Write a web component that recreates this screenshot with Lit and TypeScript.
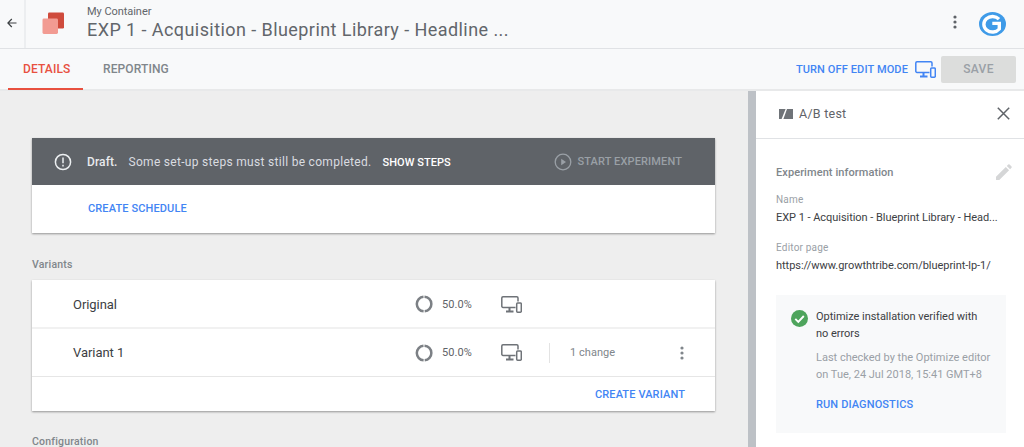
import { LitElement, html, css } from "lit";
import { customElement } from "lit/decorators.js";

const devices = (color: string, w = 21) => html`<svg class="dev" width=${w} height="17" viewBox="0 0 21 17" fill="none" stroke=${color} stroke-width="1.5">
  <path d="M14.5 11.4H2a1.2 1.2 0 0 1-1.2-1.2V2A1.2 1.2 0 0 1 2 .8h13.8A1.2 1.2 0 0 1 17 2v3.4"/>
  <path d="M8.5 11.5v3.4M5 15.6h7.5" stroke-width="2"/>
  <rect x="15.7" y="7" width="4.6" height="9.2" rx=".9"/>
</svg>`;

const donut = html`<svg width="18" height="18" viewBox="0 0 18 18" fill="none" stroke="#7c8085" stroke-width="2.5">
  <path d="M9.5 1.7a7.35 7.35 0 0 1 .2 14.65"/><path d="M8.6 16.35a7.35 7.35 0 0 1-.1-14.65"/>
</svg>`;

const kebab = (c: string) => html`<svg width="4" height="14" viewBox="0 0 4 14" fill=${c}><circle cx="2" cy="2" r="1.6"/><circle cx="2" cy="7" r="1.6"/><circle cx="2" cy="12" r="1.6"/></svg>`;

@customElement("app-root")
export class AppRoot extends LitElement {
  static styles = css`
    :host { display: block; width: 1024px; height: 447px; overflow: hidden; font-family: Roboto, "Liberation Sans", sans-serif; background: #eee; color: #3c4043; }
    * { box-sizing: border-box; }
    .top { height: 49px; display: flex; align-items: center; background: #f8f9fa; border-bottom: 1px solid #e0e2e5; }
    .back { width: 26px; height: 48px; border-right: 2px solid #eceef0; display: flex; align-items: center; padding: 0 0 2px 7px; }
    .logo { margin: 0 0 2px 16px; width: 23px; height: 23px; flex: none; }
    .titles { margin-left: 22px; flex: 1; display: flex; flex-direction: column; }
    .crumb { font-size: 11px; line-height: 13px; color: #62666b; margin-top: -1px; letter-spacing: -.05px; }
    .title { font-size: 18px; line-height: 24px; color: #62666b; letter-spacing: .43px; }
    .topkebab { display: flex; margin: -4px 22px 0 0; }
    .avatar { width: 27px; height: 24px; margin: -1px 18px 0 0; flex: none; }

    .tabs { height: 42px; display: flex; align-items: center; background: #f8f9fa; border-bottom: 2px solid #e8e9ea; padding-right: 8px; }
    .tab { font-size: 12px; font-weight: 500; letter-spacing: .12px; height: 41px; display: flex; align-items: center; color: #80868b; }
    .tab.on { color: #e8503f; margin-left: 8px; padding: 0 15px; width: 75px; height: 41px; border-bottom: 2px solid #e8503f; margin-bottom: -1px; }
    .tab.second { margin-left: 20px; }
    .sp { flex: 1; }
    .link { color: #4285f4; font-size: 11px; font-weight: 500; letter-spacing: .12px; }
    .edit { display: flex; align-items: center; gap: 7px; margin-right: 5px; }
    .save { width: 75px; height: 27px; background: #dcdddc; border-radius: 2px; color: #9aa0a6; font-size: 12px; font-weight: 500; letter-spacing: .3px; display: flex; align-items: center; justify-content: center; }

    .body { display: flex; height: 356px; }
    .main { width: 748px; padding: 47px 33px 0 32px; flex: none; background: #eee; }
    .bar { width: 8px; background: #bdc1c6; flex: none; }
    .panel { flex: 1; background: #fff; }

    .card { background: #fff; box-shadow: 0 1px 2px rgba(0,0,0,.38); }
    .draft { height: 47px; background: #5f6368; color: #dadce0; display: flex; align-items: center; font-size: 12px; padding: 1px 0 0 22px; }
    .draft b { font-weight: 500; margin-left: 15px; letter-spacing: .1px; color: #e8eaed; }
    .draft .msg { margin-left: 11px; letter-spacing: .3px; }
    .draft .show { margin-left: 11px; font-size: 11px; font-weight: 500; color: #fff; letter-spacing: .05px; }
    .start { margin-left: auto; margin-right: 33px; display: flex; align-items: center; gap: 5px; color: #9aa0a6; font-size: 11px; font-weight: 500; letter-spacing: .13px; }
    .start span { margin-bottom: 2px; }
    .sched { height: 48px; padding-left: 56px; display: flex; align-items: center; padding-bottom: 1px; }

    .label { font-size: 10.5px; line-height: 13px; font-weight: 500; color: #80868b; letter-spacing: .2px; }
    .variants-label { margin: 25px 0 9px; }
    .row { height: 48px; display: flex; align-items: center; border-bottom: 1px solid #e6e6e6; }
    .row.first { height: 49px; border-bottom: 2px solid #f1f1f1; padding-top: 1px; }
    .name { width: 383px; padding-left: 41px; font-size: 13px; color: #3c4043; letter-spacing: -.05px; flex: none; }
    .pct { margin-left: 9px; width: 49px; font-size: 11px; color: #5f6368; letter-spacing: .05px; }
    .rowdev { display: flex; margin-left: 10px; }
    .vline { width: 1px; height: 20px; background: #e3e3e3; margin-left: 27px; }
    .chg { margin-left: 20px; font-size: 11px; color: #80868b; letter-spacing: .05px; }
    .rowkebab { margin-left: auto; margin-right: 31px; display: flex; }
    .foot { height: 34px; display: flex; align-items: center; justify-content: flex-end; padding-right: 30px; }
    .config { margin-top: 24px; }

    .phead { height: 48px; border-bottom: 1px solid #e0e2e5; display: flex; align-items: center; padding: 0 0 2px 23px; font-size: 12.5px; color: #5f6368; letter-spacing: .25px; }
    .phead .t { margin-left: 6px; }
    .phead .x { margin-left: auto; margin-right: 14px; display: flex; }
    .info { padding: 24px 20px 0; }
    .ihead { display: flex; align-items: center; justify-content: space-between; font-size: 11px; font-weight: 500; color: #80868b; letter-spacing: .08px; height: 18px; }
    .ihead svg { margin-right: -8px; }
    .k { font-size: 10px; line-height: 12px; color: #9aa0a6; margin-top: 13px; letter-spacing: .2px; }
    .v { font-size: 11px; line-height: 14px; color: #3c4043; margin-top: 5px; letter-spacing: -.04px; white-space: nowrap; }
    .k.second { margin-top: 17px; }
    .status { margin: 22px 18px 0 20px; height: 138px; background: #f8f9fa; padding: 15px 0 0 15px; display: flex; gap: 8px; }
    .check { flex: none; }
    .stxt { font-size: 11px; line-height: 17px; letter-spacing: -.03px; color: #3c4043; margin-top: -2px; }
    .muted { color: #9aa0a6; margin-top: 7px; white-space: nowrap; letter-spacing: 0; }
    .run { display: block; margin-top: 15px; }
  `;

  render() {
    return html`
      <div class="top">
        <div class="back">
          <svg width="10" height="10" viewBox="0 0 10 10" fill="none" stroke="#3c4043" stroke-width="1.2"><path d="M9.5 5H1M4.8 1L.9 5l3.9 4"/></svg>
        </div>
        <svg class="logo" viewBox="0 0 23 23">
          <rect x="6" y="0.5" width="16" height="16" rx="1.2" fill="#cf4b3c"/>
          <rect x="0.5" y="6.5" width="15.5" height="15.5" rx="1.4" fill="#f29b92"/>
        </svg>
        <div class="titles">
          <div class="crumb">My Container</div>
          <div class="title">EXP 1 - Acquisition - Blueprint Library - Headline ...</div>
        </div>
        <div class="topkebab">${kebab("#5f6368")}</div>
        <svg class="avatar" viewBox="0 0 27 24">
          <ellipse cx="13.5" cy="12" rx="13.5" ry="12" fill="#3f9be8"/>
          <path d="M20 7.2A8.6 7.8 0 1 0 20.3 17v-5.6h-7" fill="none" stroke="#fff" stroke-width="3.4"/>
        </svg>
      </div>
      <div class="tabs">
        <div class="tab on">DETAILS</div>
        <div class="tab second">REPORTING</div>
        <div class="sp"></div>
        <div class="edit"><span class="link">TURN OFF EDIT MODE</span>${devices("#4285f4")}</div>
        <div class="save">SAVE</div>
      </div>
      <div class="body">
        <div class="main">
          <div class="card">
            <div class="draft">
              <svg width="18" height="18" viewBox="0 0 18 18" fill="none" stroke="#eceff1" stroke-width="1.5"><circle cx="9" cy="9" r="7.6"/><path d="M9 4.6v5.6M9 11.8v1.8"/></svg>
              <b>Draft.</b><span class="msg">Some set-up steps must still be completed.</span><span class="show">SHOW STEPS</span>
              <div class="start">
                <svg width="18" height="18" viewBox="0 0 18 18" fill="none" stroke="#9aa0a6" stroke-width="1.3"><circle cx="9" cy="9" r="7.8"/><path d="M7.2 5.8v6.4L12 9z" fill="#9aa0a6" stroke="none"/></svg>
                <span>START EXPERIMENT</span>
              </div>
            </div>
            <div class="sched"><span class="link">CREATE SCHEDULE</span></div>
          </div>
          <div class="label variants-label">Variants</div>
          <div class="card">
            <div class="row first">
              <div class="name">Original</div>${donut}<div class="pct">50.0%</div>
              <div class="rowdev">${devices("#6f7378")}</div>
            </div>
            <div class="row">
              <div class="name">Variant 1</div>${donut}<div class="pct">50.0%</div>
              <div class="rowdev">${devices("#6f7378")}</div>
              <div class="vline"></div><div class="chg">1 change</div>
              <div class="rowkebab">${kebab("#80868b")}</div>
            </div>
            <div class="foot"><span class="link">CREATE VARIANT</span></div>
          </div>
          <div class="label config">Configuration</div>
        </div>
        <div class="bar"></div>
        <div class="panel">
          <div class="phead">
            <svg width="14" height="10" viewBox="0 0 14 10" fill="#6f7378"><path d="M0 0h6.6L2.6 10H0zM8 0h6v10H4.4z"/></svg>
            <span class="t">A/B test</span>
            <span class="x"><svg width="13" height="13" viewBox="0 0 13 13" fill="none" stroke="#5f6368" stroke-width="1.5"><path d="M.8.8l11.4 11.4M12.2.8L.8 12.2"/></svg></span>
          </div>
          <div class="info">
            <div class="ihead">Experiment information
              <svg width="16" height="16" viewBox="0 0 16 16" fill="#d5d6d7"><path d="M0 16v-3.3L9.8 2.9l3.3 3.3L3.3 16zM10.8 1.9l1.4-1.4a1 1 0 0 1 1.4 0l1.9 1.9a1 1 0 0 1 0 1.4l-1.4 1.4z"/></svg>
            </div>
            <div class="k">Name</div>
            <div class="v">EXP 1 - Acquisition - Blueprint Library - Head...</div>
            <div class="k second">Editor page</div>
            <div class="v">https://www.growthtribe.com/blueprint-lp-1/</div>
          </div>
          <div class="status">
            <svg class="check" width="17" height="17" viewBox="0 0 17 17"><circle cx="8.5" cy="8.5" r="8.5" fill="#4ea45c"/><path d="M4.3 8.8l3 3 5.5-5.8" fill="none" stroke="#fff" stroke-width="1.9"/></svg>
            <div>
              <div class="stxt">Optimize installation verified with<br/>no errors</div>
              <div class="stxt muted">Last checked by the Optimize editor<br/>on Tue, 24 Jul 2018, 15:41 GMT+8</div>
              <span class="link run">RUN DIAGNOSTICS</span>
            </div>
          </div>
        </div>
      </div>
    `;
  }
}
